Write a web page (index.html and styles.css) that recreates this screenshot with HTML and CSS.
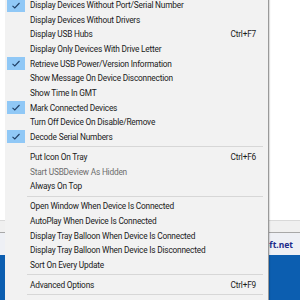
FILE: index.html
```html
<!DOCTYPE html>
<html>
<head>
<meta charset="utf-8">
<link rel="stylesheet" href="styles.css">
</head>
<body>
<div class="app">
  <div class="app-body"></div>
  <div class="app-toolbar"></div>
  <div class="app-link"><span class="link">NirSoft.net</span></div>
  <div class="app-blue"></div>

  <div class="menu">
    <div class="item checked"><span class="check"><svg viewBox="0 0 18 13" width="18" height="13"><path d="M5.5 6.8 L7.8 9 L12.5 4" fill="none" stroke="#1f3f66" stroke-width="1.1"/></svg></span><span class="label">Display Devices Without Port/Serial Number</span></div>
    <div class="item"><span class="check"></span><span class="label">Display Devices Without Drivers</span></div>
    <div class="item"><span class="check"></span><span class="label">Display USB Hubs</span><span class="key">Ctrl+F7</span></div>
    <div class="item"><span class="check"></span><span class="label">Display Only Devices With Drive Letter</span></div>
    <div class="item checked"><span class="check"><svg viewBox="0 0 18 13" width="18" height="13"><path d="M5.5 6.8 L7.8 9 L12.5 4" fill="none" stroke="#1f3f66" stroke-width="1.1"/></svg></span><span class="label">Retrieve USB Power/Version Information</span></div>
    <div class="item"><span class="check"></span><span class="label">Show Message On Device Disconnection</span></div>
    <div class="item"><span class="check"></span><span class="label">Show Time In GMT</span></div>
    <div class="item checked"><span class="check"><svg viewBox="0 0 18 13" width="18" height="13"><path d="M5.5 6.8 L7.8 9 L12.5 4" fill="none" stroke="#1f3f66" stroke-width="1.1"/></svg></span><span class="label">Mark Connected Devices</span></div>
    <div class="item"><span class="check"></span><span class="label">Turn Off Device On Disable/Remove</span></div>
    <div class="item checked"><span class="check"><svg viewBox="0 0 18 13" width="18" height="13"><path d="M5.5 6.8 L7.8 9 L12.5 4" fill="none" stroke="#1f3f66" stroke-width="1.1"/></svg></span><span class="label">Decode Serial Numbers</span></div>
    <div class="sep"></div>
    <div class="item"><span class="check"></span><span class="label">Put Icon On Tray</span><span class="key">Ctrl+F6</span></div>
    <div class="item disabled"><span class="check"></span><span class="label">Start USBDeview As Hidden</span></div>
    <div class="item"><span class="check"></span><span class="label">Always On Top</span></div>
    <div class="sep"></div>
    <div class="item"><span class="check"></span><span class="label">Open Window When Device Is Connected</span></div>
    <div class="item"><span class="check"></span><span class="label">AutoPlay When Device Is Connected</span></div>
    <div class="item"><span class="check"></span><span class="label">Display Tray Balloon When Device Is Connected</span></div>
    <div class="item"><span class="check"></span><span class="label">Display Tray Balloon When Device Is Disconnected</span></div>
    <div class="item"><span class="check"></span><span class="label">Sort On Every Update</span></div>
    <div class="sep"></div>
    <div class="item"><span class="check"></span><span class="label">Advanced Options</span><span class="key">Ctrl+F9</span></div>
    <div class="sep"></div>
    <div class="item"><span class="check"></span><span class="label">&nbsp;</span></div>
  </div>
</div>
</body>
</html>
```
FILE: styles.css
```css
html, body {
  margin: 0;
  padding: 0;
  width: 300px;
  height: 300px;
  overflow: hidden;
  background: #ffffff;
}

.app {
  position: relative;
  width: 300px;
  height: 300px;
  display: flex;
  flex-direction: column;
  font-family: Roboto, "Noto Sans", sans-serif;
}

.app-body {
  height: 220px;
  background: #ffffff;
}

.app-toolbar {
  height: 11px;
  background: #f0f0f0;
  border-top: 1px solid #d9d9d9;
  border-bottom: 1px solid #a8a8a8;
}

.app-link {
  height: 22px;
  background: #eef0f5;
  display: flex;
  align-items: center;
  justify-content: flex-end;
  padding-right: 7px;
}

.link {
  font-family: "Noto Sans", sans-serif;
  font-size: 8.5px;
  font-weight: bold;
  color: #1b2a8a;
}

.app-blue {
  flex: 1;
  background: #0c5eb0;
}

.menu {
  position: absolute;
  left: 5px;
  top: -2.33px;
  width: 263px;
  background: #f2f2f2;
  border-right: 1px solid #9a9a9a;
  box-shadow: 1px 0 1px rgba(0,0,0,0.12);
  font-size: 8.3px;
  letter-spacing: -0.2px;
  color: #1a1a1a;
}

.item {
  height: 14.67px;
  display: flex;
  align-items: center;
}

.check {
  width: 18px;
  height: 13px;
  margin-left: 2px;
  margin-right: 5px;
  flex: none;
  display: flex;
}

.checked .check {
  background: #90c8f6;
}

.label {
  flex: 1;
  white-space: nowrap;
}

.key {
  margin-right: 12px;
  white-space: nowrap;
}

.disabled {
  color: #6d6d6d;
}

.sep {
  height: 5.33px;
  display: flex;
  align-items: center;
  padding-left: 22px;
  padding-right: 5px;
}

.sep::after {
  content: "";
  flex: 1;
  height: 1px;
  background: #d7d7d7;
}
```
